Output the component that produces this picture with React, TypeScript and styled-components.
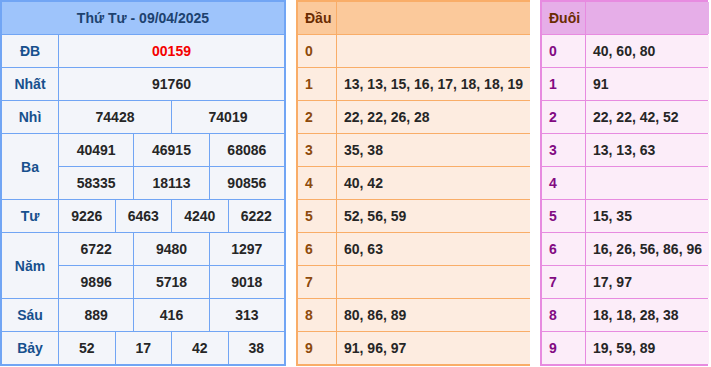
import styled, { createGlobalStyle } from "styled-components";

const GlobalStyle = createGlobalStyle`
  body {
    margin: 0;
    background: #ffffff;
    font-family: "Liberation Sans", Arial, sans-serif;
  }
`;

interface Palette {
  line: string;
  head: string;
  cell: string;
  label: string;
  headText: string;
}

const blue: Palette = {
  line: "#71a5f4",
  head: "#9ec4fb",
  cell: "#f3f5fa",
  label: "#17508d",
  headText: "#1d426f",
};

const orange: Palette = {
  line: "#f9ad68",
  head: "#fbc99b",
  cell: "#fdece0",
  label: "#8d4a0c",
  headText: "#6a2c02",
};

const pink: Palette = {
  line: "#e78be0",
  head: "#e6aee8",
  cell: "#fcedf9",
  label: "#820a82",
  headText: "#6a2c02",
};

const Page = styled.div`
  display: flex;
  gap: 10px;
  align-items: flex-start;
`;

const Board = styled.div<{ $cols: string; $p: Palette; $w: number }>`
  width: ${(p) => p.$w}px;
  box-sizing: border-box;
  display: grid;
  grid-template-columns: ${(p) => p.$cols};
  grid-auto-rows: 32px;
  gap: 1px;
  background: ${(p) => p.$p.line};
  border: 2px solid ${(p) => p.$p.line};
  font-size: 14px;
  font-weight: bold;
`;

const HeadCell = styled.div<{ $p: Palette; $span?: number; $left?: boolean }>`
  grid-column: span ${(p) => p.$span || 1};
  background: ${(p) => p.$p.head};
  color: ${(p) => p.$p.headText};
  display: flex;
  align-items: center;
  justify-content: ${(p) => (p.$left ? "flex-start" : "center")};
  padding: 0 7px;
`;

const Cell = styled.div<{
  $p: Palette;
  $span?: number;
  $rows?: number;
  $left?: boolean;
  $color?: string;
}>`
  grid-column: span ${(p) => p.$span || 1};
  grid-row: span ${(p) => p.$rows || 1};
  background: ${(p) => p.$p.cell};
  color: ${(p) => p.$color || "#262626"};
  display: flex;
  align-items: center;
  justify-content: ${(p) => (p.$left ? "flex-start" : "center")};
  padding: 0 7px;
  white-space: nowrap;
`;

const results: { name: string; nums: string[][]; red?: boolean }[] = [
  { name: "ĐB", nums: [["00159"]], red: true },
  { name: "Nhất", nums: [["91760"]] },
  { name: "Nhì", nums: [["74428", "74019"]] },
  {
    name: "Ba",
    nums: [
      ["40491", "46915", "68086"],
      ["58335", "18113", "90856"],
    ],
  },
  { name: "Tư", nums: [["9226", "6463", "4240", "6222"]] },
  {
    name: "Năm",
    nums: [
      ["6722", "9480", "1297"],
      ["9896", "5718", "9018"],
    ],
  },
  { name: "Sáu", nums: [["889", "416", "313"]] },
  { name: "Bảy", nums: [["52", "17", "42", "38"]] },
];

const dau = [
  "",
  "13, 13, 15, 16, 17, 18, 18, 19",
  "22, 22, 26, 28",
  "35, 38",
  "40, 42",
  "52, 56, 59",
  "60, 63",
  "",
  "80, 86, 89",
  "91, 96, 97",
];

const duoi = [
  "40, 60, 80",
  "91",
  "22, 22, 42, 52",
  "13, 13, 63",
  "",
  "15, 35",
  "16, 26, 56, 86, 96",
  "17, 97",
  "18, 18, 28, 38",
  "19, 59, 89",
];

const ResultBoard = () => (
  <Board $p={blue} $w={286} $cols="56px repeat(12, 1fr)">
    <HeadCell $p={blue} $span={13}>
      Thứ Tư - 09/04/2025
    </HeadCell>
    {results.map((r) => [
      <Cell
        key={r.name}
        $p={blue}
        $rows={r.nums.length}
        $color={blue.label}
      >
        {r.name}
      </Cell>,
      ...r.nums.flatMap((line, i) =>
        line.map((n, j) => (
          <Cell
            key={`${r.name}-${i}-${j}`}
            $p={blue}
            $span={12 / line.length}
            $color={r.red ? "#f50000" : undefined}
          >
            {n}
          </Cell>
        ))
      ),
    ])}
  </Board>
);

const LotoBoard = ({
  title,
  rows,
  p,
  w,
  labelW,
}: {
  title: string;
  rows: string[];
  p: Palette;
  w: number;
  labelW: number;
}) => (
  <Board $p={p} $w={w} $cols={`${labelW}px 1fr`}>
    <HeadCell $p={p} $left>
      {title}
    </HeadCell>
    <HeadCell $p={p} />
    {rows.map((v, i) => [
      <Cell key={`l${i}`} $p={p} $left $color={p.label}>
        {i}
      </Cell>,
      <Cell key={`v${i}`} $p={p} $left>
        {v}
      </Cell>,
    ])}
  </Board>
);

export default function App() {
  return (
    <>
      <GlobalStyle />
      <Page>
        <ResultBoard />
        <LotoBoard title="Đầu" rows={dau} p={orange} w={234} labelW={38} />
        <LotoBoard title="Đuôi" rows={duoi} p={pink} w={168} labelW={43} />
      </Page>
    </>
  );
}
